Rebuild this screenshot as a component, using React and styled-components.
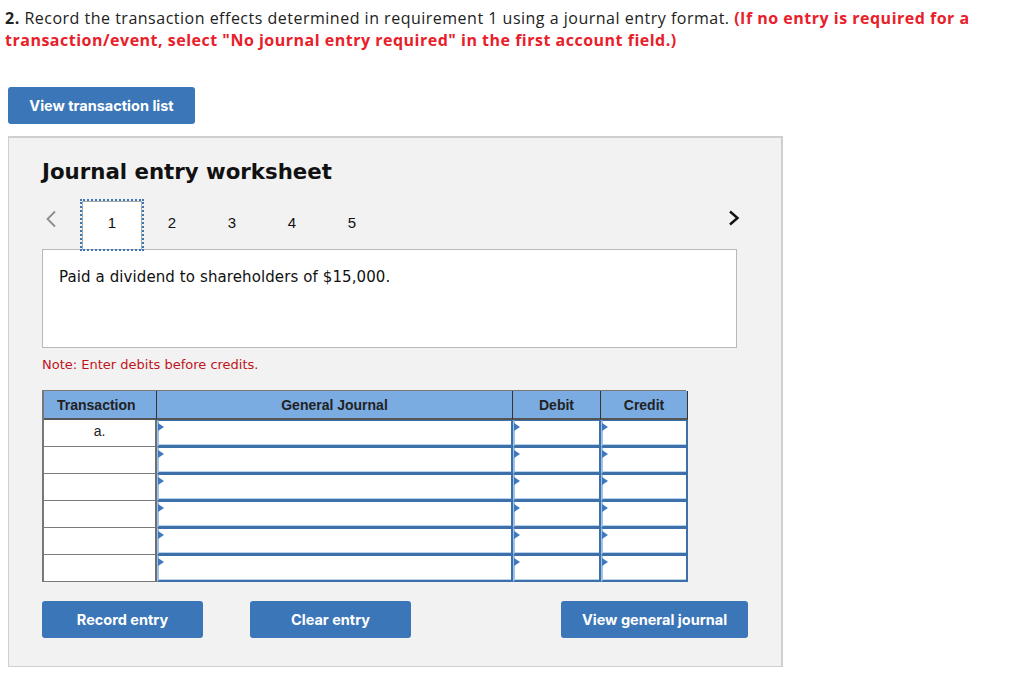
import React from "react";
import styled, { createGlobalStyle } from "styled-components";

const GlobalStyle = createGlobalStyle`
  html, body {
    margin: 0;
    padding: 0;
    background: #fff;
  }
  * {
    box-sizing: border-box;
  }
`;

const Page = styled.div`
  padding: 7px 8px 0 5px;
  width: 1024px;
`;

const Question = styled.p`
  margin: 0;
  width: 1000px;
  font-family: "Open Sans", "Liberation Sans", sans-serif;
  font-size: 16px;
  line-height: 22px;
  letter-spacing: 0.5px;
  color: #222;
`;

const Strong = styled.b`
  font-weight: 700;
`;

const Warning = styled.span`
  color: #e8202a;
  font-weight: 700;
`;

const BlueButton = styled.button`
  display: inline-flex;
  align-items: center;
  justify-content: center;
  height: 37px;
  width: ${(p) => p.$w}px;
  padding: 0;
  border: none;
  border-radius: 3px;
  background: #3b76b9;
  color: #fff;
  font-family: Inter, "Liberation Sans", sans-serif;
  font-weight: 700;
  font-size: 14.5px;
  cursor: pointer;
`;

const TopBar = styled.div`
  margin-top: 36px;
  margin-bottom: 12px;
  padding-left: 3px;
`;

const Panel = styled.div`
  margin-left: 3px;
  width: 775px;
  background: #f2f2f2;
  border: 1px solid #cfcfcf;
  border-top-width: 2px;
  border-right-width: 2px;
  padding: 22px 33px 28px 33px;
`;

const Title = styled.h2`
  margin: 0;
  font-family: "DejaVu Sans", Verdana, sans-serif;
  font-size: 21.3px;
  line-height: 24px;
  font-weight: 700;
  color: #111;
`;

const Nav = styled.div`
  display: flex;
  align-items: stretch;
  height: 48px;
  margin-top: 17px;
`;

const Arrow = styled.div`
  display: flex;
  align-items: flex-start;
  width: ${(p) => p.$w}px;
  padding-top: 9px;
  padding-left: ${(p) => p.$pl}px;
`;

const Tabs = styled.div`
  display: flex;
  flex: 1;
`;

const Tab = styled.div`
  width: 60px;
  display: flex;
  align-items: center;
  justify-content: center;
  font-family: "Liberation Sans", Arial, sans-serif;
  font-size: 15px;
  color: #111;
  padding-bottom: 6px;
  background: ${(p) => (p.$active ? "#fff" : "transparent")};
  border: ${(p) => (p.$active ? "1px solid #a8a8a8" : "1px solid transparent")};
  border-bottom: none;
  outline: ${(p) => (p.$active ? "2px dotted #3b76b9" : "none")};
  outline-offset: 0;
  position: relative;
  z-index: 1;
`;

const Description = styled.div`
  width: 695px;
  height: 99px;
  background: #fff;
  border: 1px solid #b8b8b8;
  padding: 18px 16px;
  font-family: "DejaVu Sans", Verdana, sans-serif;
  font-size: 15px;
  line-height: 19px;
  letter-spacing: 0.1px;
  color: #111;
`;

const Note = styled.div`
  margin-top: 9px;
  font-family: "DejaVu Sans", Verdana, sans-serif;
  font-size: 13px;
  line-height: 16px;
  color: #c1141c;
`;

const Table = styled.div`
  margin-top: 17px;
  display: grid;
  grid-template-columns: 113px 356px 88px 87px;
  grid-template-rows: 29px;
  grid-auto-rows: 27px;
  width: 644px;
  border-top: 1px solid #777;
  border-left: 2px solid #777;
`;

const HeadCell = styled.div`
  display: flex;
  align-items: center;
  justify-content: center;
  background: #7aace2;
  border-right: 1px solid #333;
  border-bottom: 2px solid #555;
  font-family: "Liberation Sans", Arial, sans-serif;
  font-weight: 700;
  font-size: 14px;
  color: #222;
  &:first-child {
    justify-content: flex-start;
    padding-left: 13px;
  }
  &:last-child {
    border-right: 2px solid #666;
  }
`;

const TxCell = styled.div`
  display: flex;
  align-items: center;
  justify-content: center;
  background: #fff;
  border-right: 2px solid #6f6f6f;
  border-bottom: 1px solid #7a7a7a;
  font-family: "Liberation Sans", Arial, sans-serif;
  font-size: 14px;
  color: #222;
  padding-bottom: 4px;
`;

const InputCell = styled.div`
  position: relative;
  background: #fff;
  border-top: 1px solid #3d6fa9;
  border-bottom: 2px solid #3d6fa9;
  border-left: 2px solid #9fc2ea;
  border-right: 2px solid #3d6fa9;
  box-shadow: inset 0 -1px 0 #b9d2ee;
  &::before {
    content: "";
    position: absolute;
    left: -1px;
    top: 2px;
    border-style: solid;
    border-width: 4px 0 4px 6px;
    border-color: transparent transparent transparent #3d78c0;
  }
`;

const Actions = styled.div`
  display: flex;
  gap: 47px;
  margin-top: 19px;
  & > :last-child {
    margin-left: auto;
  }
`;

const ChevronLeft = () => (
  <svg width="12" height="18" viewBox="0 0 12 18" fill="none">
    <path d="M10 1.5 L2.5 9 L10 16.5" stroke="#8c8c8c" strokeWidth="1.8" />
  </svg>
);

const ChevronRight = () => (
  <svg width="12" height="16" viewBox="0 0 12 16" fill="none">
    <path d="M2 1.5 L9.5 8 L2 14.5" stroke="#111" strokeWidth="2.4" />
  </svg>
);

const rows = ["a.", "", "", "", "", ""];

export default function App() {
  return (
    <Page>
      <GlobalStyle />
      <Question>
        <Strong>2.</Strong> Record the transaction effects determined in requirement 1 using a
        journal entry format.{" "}
        <Warning>
          (If no entry is required for a transaction/event, select "No journal entry required" in
          the first account field.)
        </Warning>
      </Question>

      <TopBar>
        <BlueButton $w={187}>View transaction list</BlueButton>
      </TopBar>

      <Panel>
        <Title>Journal entry worksheet</Title>

        <Nav>
          <Arrow $w={40} $pl={3}>
            <ChevronLeft />
          </Arrow>
          <Tabs>
            {[1, 2, 3, 4, 5].map((n) => (
              <Tab key={n} $active={n === 1}>
                {n}
              </Tab>
            ))}
          </Tabs>
          <Arrow $w={20} $pl={0}>
            <ChevronRight />
          </Arrow>
        </Nav>

        <Description>Paid a dividend to shareholders of $15,000.</Description>
        <Note>Note: Enter debits before credits.</Note>

        <Table>
          <HeadCell>Transaction</HeadCell>
          <HeadCell>General Journal</HeadCell>
          <HeadCell>Debit</HeadCell>
          <HeadCell>Credit</HeadCell>
          {rows.map((label, i) => (
            <React.Fragment key={i}>
              <TxCell>{label}</TxCell>
              <InputCell />
              <InputCell />
              <InputCell />
            </React.Fragment>
          ))}
        </Table>

        <Actions>
          <BlueButton $w={161}>Record entry</BlueButton>
          <BlueButton $w={161}>Clear entry</BlueButton>
          <BlueButton $w={187}>View general journal</BlueButton>
        </Actions>
      </Panel>
    </Page>
  );
}
